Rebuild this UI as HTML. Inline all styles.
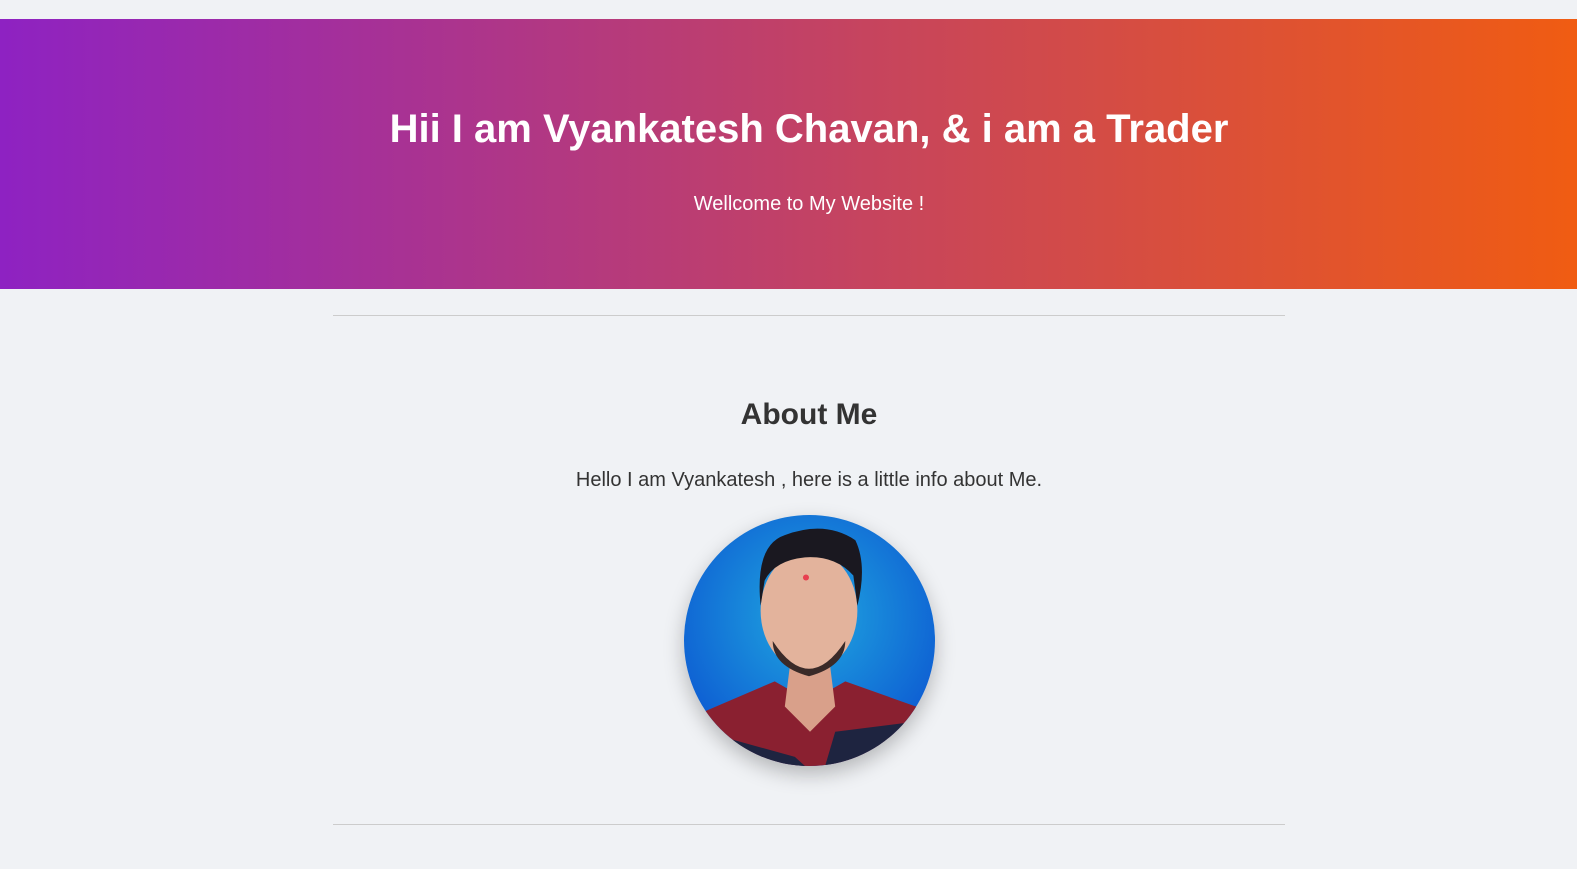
<!DOCTYPE html>
<html><head><style>
body{margin:0;background:#f0f2f5;font-family:"Liberation Sans",Arial,sans-serif;width:1577px;height:869px;overflow:hidden;position:relative}
.hdr{position:absolute;top:19px;left:0;width:1577px;height:270px;background:linear-gradient(90deg,#8e22c2,#c6445e 55%,#f05c12)}
h1{position:absolute;top:107px;left:0;width:1618px;text-align:center;margin:0;color:#fff;font-size:40px;font-weight:bold}
.sub{position:absolute;top:193px;left:0;width:1618px;text-align:center;color:#fff;font-size:20px}
hr{position:absolute;left:333px;width:952px;margin:0;border:0;border-top:1px solid #ccc}
h2{position:absolute;top:398px;left:0;width:1618px;text-align:center;margin:0;font-size:30px;color:#333}
.p{position:absolute;top:469px;left:0;width:1618px;text-align:center;font-size:20px;color:#333}
.av{position:absolute;left:684px;top:515px;width:251px;height:251px;border-radius:50%;overflow:hidden;box-shadow:0 8px 20px rgba(0,0,0,.25)}
</style></head><body>
<div class="hdr"></div>
<h1>Hii I am Vyankatesh Chavan, &amp; i am a Trader</h1>
<div class="sub">Wellcome to My Website !</div>
<hr style="top:315px">
<h2>About Me</h2>
<div class="p">Hello I am Vyankatesh , here is a little info about Me.</div>
<div class="av"><svg width="251" height="251" viewBox="0 0 249 249">
<defs><radialGradient id="bg" cx="0.5" cy="0.4" r="0.7"><stop offset="0" stop-color="#20a8e0"/><stop offset="1" stop-color="#0a4fd0"/></radialGradient></defs>
<rect width="249" height="249" fill="url(#bg)"/>
<path d="M0 220 L20 195 L90 165 L125 185 L160 165 L230 190 L249 205 L249 249 L0 249Z" fill="#8a2030"/>
<path d="M20 215 L110 240 L120 249 L20 249Z M140 249 L150 215 L230 205 L249 249Z" fill="#1e2440"/>
<path d="M105 150 L145 150 L150 190 L125 215 L100 190Z" fill="#d9a08a"/>
<ellipse cx="124" cy="95" rx="48" ry="60" fill="#e3b39c"/>
<path d="M76 90 Q70 30 100 20 Q140 5 170 25 Q182 50 172 90 L168 60 Q150 40 120 42 Q90 45 80 65Z" fill="#1a1820"/>
<path d="M88 125 Q124 180 160 125 Q160 150 124 160 Q88 150 88 125Z" fill="#3a2a28"/>
<circle cx="121" cy="62" r="3" fill="#e84050"/>
</svg></div>
<hr style="top:824px">
</body></html>
